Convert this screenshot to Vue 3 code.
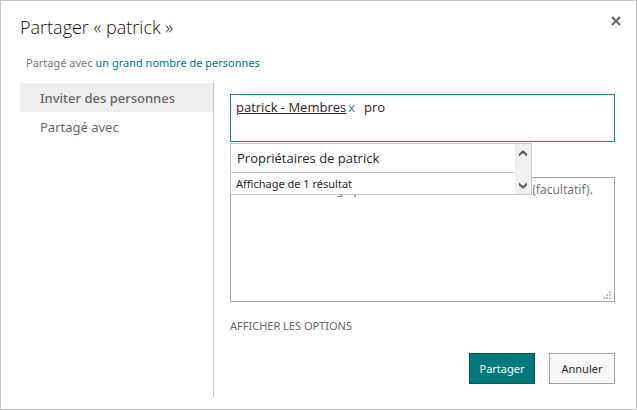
<script setup>
import { ref } from 'vue'

const tabs = ['Inviter des personnes', 'Partagé avec']
const activeTab = ref(0)
const query = ref('pro')
const members = ref(['patrick - Membres'])
const message = ref('')
const gripDots = [[6, 0], [3, 3], [6, 3], [0, 6], [3, 6], [6, 6]]
</script>

<template>
  <main class="dialog" role="dialog" aria-labelledby="dialog-title">
    <header class="header">
      <h1 id="dialog-title">Partager « patrick »</h1>
      <button class="close" type="button" aria-label="Fermer">
        <svg width="10" height="10" viewBox="0 0 10 10"><path d="M1 1L9 9M9 1L1 9" /></svg>
      </button>
    </header>
    <p class="shared">Partagé avec <a href="#">un grand nombre de personnes</a></p>

    <div class="body">
      <nav class="tabs">
        <button
          v-for="(tab, i) in tabs"
          :key="tab"
          type="button"
          class="tab"
          :class="{ active: i === activeTab }"
          @click="activeTab = i"
        >{{ tab }}</button>
      </nav>

      <form class="form" @submit.prevent>
        <div class="picker">
          <div class="picker-box">
            <span v-for="m in members" :key="m" class="token">
              <span class="token-name">{{ m }}</span>
              <button type="button" class="remove" :aria-label="`Supprimer ${m}`" @click="members = []">x</button>
            </span>
            <input v-model="query" class="query" type="text" aria-label="Inviter des personnes" />
          </div>
          <div class="suggestions">
            <div class="results">
              <button type="button" class="result">Propriétaires de patrick</button>
              <div class="count">Affichage de 1 résultat</div>
            </div>
            <div class="scroll">
              <svg width="8" height="7" viewBox="0 0 8 7"><path d="M0 3.500L4 0L8 3.500V6.500L4 3L0 6.500Z" /></svg>
              <svg width="8" height="7" viewBox="0 0 8 7"><path d="M0 0.500L4 4L8 0.500V3.500L4 7L0 3.500Z" /></svg>
            </div>
          </div>
        </div>

        <div class="message">
          <textarea
            v-model="message"
            aria-label="Message"
            placeholder="Incluez un message personnel dans votre invitation (facultatif)."
          ></textarea>
          <svg class="grip" width="8" height="8" viewBox="0 0 8 8">
            <rect v-for="([x, y], i) in gripDots" :key="i" :x="x" :y="y" width="2" height="2" />
          </svg>
        </div>

        <a class="options" href="#">AFFICHER LES OPTIONS</a>

        <div class="actions">
          <button class="btn primary" type="submit">Partager</button>
          <button class="btn" type="button">Annuler</button>
        </div>
      </form>
    </div>
  </main>
</template>

<style>
body {
  margin: 0;
  background: #fff;
}
</style>

<style scoped>
.dialog,
.dialog * {
  box-sizing: border-box;
}
.dialog {
  min-height: 100vh;
  padding: 12px 21px 12px 19px;
  border: 1px solid #c6c6c6;
  background: #fff;
  color: #262626;
  font: 11px/16px "Noto Sans", "Open Sans", sans-serif;
}
button,
input,
textarea {
  margin: 0;
  padding: 0;
  border: 0;
  border-radius: 0;
  background: none;
  color: inherit;
  font: inherit;
  outline: 0;
}
button {
  cursor: pointer;
}
a {
  text-decoration: none;
}
.header {
  display: flex;
  justify-content: space-between;
  align-items: flex-start;
}
h1 {
  margin: 0;
  color: #111;
  font-family: "Open Sans", sans-serif;
  font-size: 18px;
  line-height: 28px;
  font-weight: 300;
}
.close {
  display: flex;
  margin: 3px -6px 0 0;
}
.close path {
  fill: none;
  stroke: #666;
  stroke-width: 2;
}
.shared {
  margin: 14px 0 12px 6px;
  color: #777;
}
.shared a {
  color: #00797c;
}
.body {
  display: flex;
}
.tabs {
  flex: 0 0 194px;
  border-right: 1px solid #c6c6c6;
}
.tab {
  display: block;
  width: 100%;
  height: 29px;
  padding-left: 20px;
  color: #666;
  font-size: 13px;
  text-align: left;
}
.tab.active {
  background: #eee;
  font-weight: 500;
}
.form {
  flex: 1;
  min-width: 0;
  padding: 11px 0 13px 16px;
}
.picker {
  position: relative;
}
.picker-box {
  display: flex;
  align-items: flex-start;
  height: 48px;
  padding: 3px 5px;
  border: 1px solid #1a8587;
  font-family: "Open Sans", sans-serif;
  font-size: 13px;
  line-height: 18px;
}
.token {
  display: flex;
  flex: none;
  gap: 2px;
  margin-right: 9px;
}
.token-name {
  text-decoration: underline;
}
.remove {
  color: #1a8587;
}
.query {
  flex: 1;
  min-width: 0;
}
.suggestions {
  position: absolute;
  z-index: 1;
  top: 49px;
  left: 0;
  display: flex;
  width: 302px;
  height: 52px;
  border: 1px solid #c6c6c6;
  background: #fff;
}
.results {
  flex: 1;
  margin-right: 1px;
}
.result {
  display: block;
  width: 100%;
  height: 29px;
  padding-left: 6px;
  border-bottom: 1px solid #c6c6c6;
  font-family: "Open Sans", sans-serif;
  font-size: 13px;
  text-align: left;
}
.count {
  padding: 3px 5px;
}
.scroll {
  display: flex;
  flex-direction: column;
  justify-content: space-between;
  align-items: center;
  width: 16px;
  padding: 6px 0 5px;
  background: #f0f0f0;
}
.scroll path {
  fill: #606060;
}
.message {
  position: relative;
  margin-top: 35px;
}
textarea {
  display: block;
  width: 100%;
  height: 125px;
  padding: 3px 8px;
  border: 1px solid #a3a3a3;
  font-size: 12px;
  line-height: 18px;
  resize: none;
}
textarea::placeholder {
  color: #777;
  opacity: 1;
}
.grip {
  position: absolute;
  right: 4px;
  bottom: 3px;
  fill: #c0c0c0;
}
.options {
  display: block;
  margin-top: 16px;
  color: #666;
}
.actions {
  display: flex;
  justify-content: flex-end;
  gap: 14px;
  margin-top: 19px;
}
.btn {
  width: 66px;
  height: 31px;
  border: 1px solid #a3a3a3;
  background: #f7f7f7;
}
.primary {
  border-color: #00585b;
  background: #00797c;
  color: #fff;
}
</style>
